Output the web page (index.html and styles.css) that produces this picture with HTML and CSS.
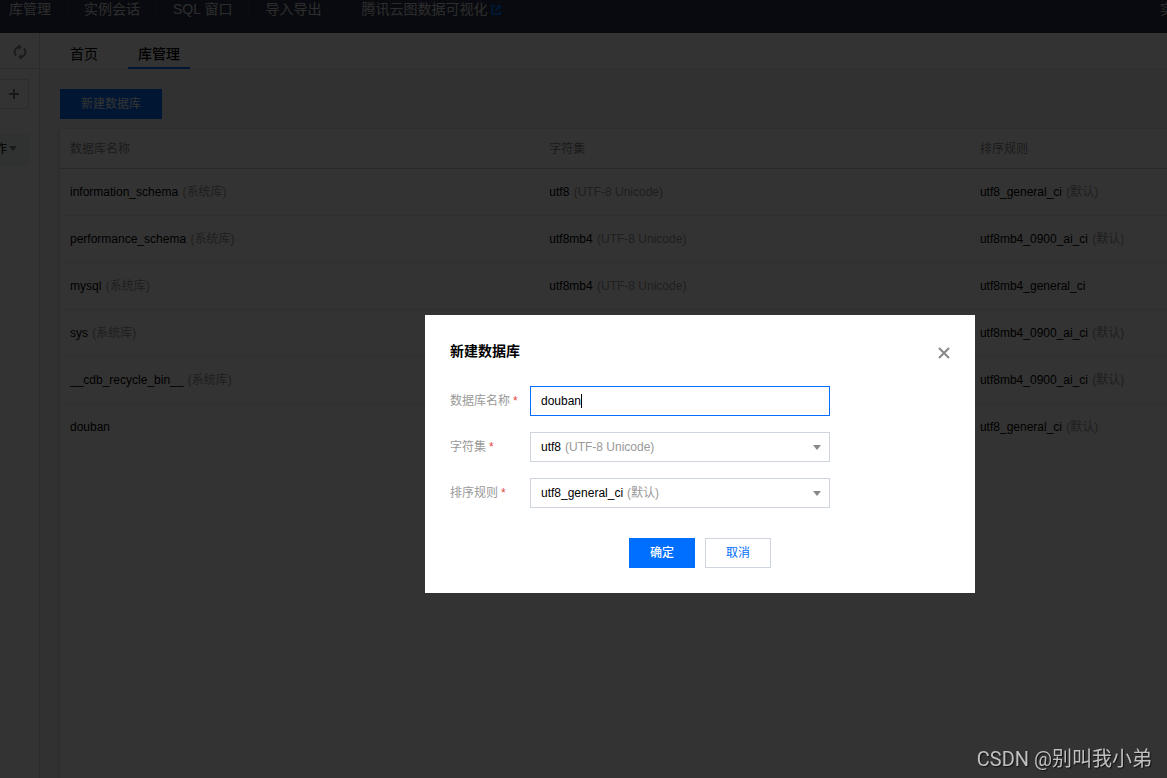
FILE: index.html
```html
<!DOCTYPE html>
<html lang="zh-CN">
<head>
<meta charset="utf-8">
<title>库管理</title>
<link rel="stylesheet" href="styles.css">
</head>
<body>
<div class="app">
  <header class="topbar">
    <nav class="topnav">
      <a class="topnav-item" href="#">库管理</a>
      <a class="topnav-item" href="#">实例会话</a>
      <a class="topnav-item" href="#">SQL 窗口</a>
      <a class="topnav-item" href="#">导入导出</a>
      <a class="topnav-item topnav-external" href="#">腾讯云图数据可视化
        <svg class="icon-external" viewBox="0 0 10 10" width="10" height="10" fill="none" stroke="currentColor" stroke-width="2"><path d="M4 1H1v8h8V6"/><path d="M6 1h3v3M9 1L4 6"/></svg>
      </a>
    </nav>
    <a class="topbar-right" href="#">实</a>
  </header>
  <div class="body">
    <aside class="sidebar">
      <div class="sidebar-head">
        <button class="icon-button" type="button" aria-label="刷新">
          <svg viewBox="0 0 14 16" width="14" height="16"><g fill="none" stroke="currentColor" stroke-width="2"><path d="M3 11.500C.5 8.500 1.500 3.500 6 3"/><path d="M11 4.500C13.500 7.500 12.500 12.500 8 13"/></g><path fill="currentColor" d="M5.500 0v6L9 3zM8.500 10v6L5 13z"/></svg>
        </button>
      </div>
      <button class="add-button" type="button" aria-label="添加">
        <svg viewBox="0 0 10 10" width="10" height="10"><path d="M5 0v10M0 5h10" stroke="currentColor" stroke-width="2"/></svg>
      </button>
      <button class="action-button" type="button">作<svg viewBox="0 0 8 5" width="8" height="5"><path fill="#888" d="M0 0h8L4 5z"/></svg></button>
    </aside>
    <main class="main">
      <nav class="tabs">
        <a class="tab" href="#">首页</a>
        <a class="tab tab-active" href="#">库管理</a>
      </nav>
      <section class="content">
        <button class="button button-primary create-button" type="button">新建数据库</button>
        <div class="panel">
          <table class="table">
            <thead>
              <tr><th class="col-name">数据库名称</th><th class="col-charset">字符集</th><th>排序规则</th></tr>
            </thead>
            <tbody>
              <tr><td>information_schema <span class="muted">(系统库)</span></td><td>utf8 <span class="muted">(UTF-8 Unicode)</span></td><td>utf8_general_ci <span class="muted">(默认)</span></td></tr>
              <tr><td>performance_schema <span class="muted">(系统库)</span></td><td>utf8mb4 <span class="muted">(UTF-8 Unicode)</span></td><td>utf8mb4_0900_ai_ci <span class="muted">(默认)</span></td></tr>
              <tr><td>mysql <span class="muted">(系统库)</span></td><td>utf8mb4 <span class="muted">(UTF-8 Unicode)</span></td><td>utf8mb4_general_ci</td></tr>
              <tr><td>sys <span class="muted">(系统库)</span></td><td></td><td>utf8mb4_0900_ai_ci <span class="muted">(默认)</span></td></tr>
              <tr><td>__cdb_recycle_bin__ <span class="muted">(系统库)</span></td><td></td><td>utf8mb4_0900_ai_ci <span class="muted">(默认)</span></td></tr>
              <tr><td>douban</td><td></td><td>utf8_general_ci <span class="muted">(默认)</span></td></tr>
            </tbody>
          </table>
        </div>
      </section>
    </main>
  </div>
</div>

<div class="overlay">
  <form class="dialog" role="dialog" aria-labelledby="dialog-title">
    <div class="dialog-head">
      <h2 class="dialog-title" id="dialog-title">新建数据库</h2>
      <button class="icon-button dialog-close" type="button" aria-label="关闭">
        <svg viewBox="0 0 12 12" width="12" height="12"><path d="M1 1l10 10M11 1L1 11" stroke="currentColor" stroke-width="2"/></svg>
      </button>
    </div>
    <div class="fields">
      <div class="field">
        <label for="db-name">数据库名称<span class="required">*</span></label>
        <div class="control control-focus"><input id="db-name" class="control-value" type="text" value="douban"><span class="caret"></span></div>
      </div>
      <div class="field">
        <label for="charset">字符集<span class="required">*</span></label>
        <div class="control">
          <select id="charset" class="control-value"><option>utf8</option></select>
          <span class="control-note">(UTF-8 Unicode)</span>
          <svg class="arrow" viewBox="0 0 8 5" width="8" height="5"><path fill="#888" d="M0 0h8L4 5z"/></svg>
        </div>
      </div>
      <div class="field">
        <label for="collation">排序规则<span class="required">*</span></label>
        <div class="control">
          <select id="collation" class="control-value"><option>utf8_general_ci</option></select>
          <span class="control-note">(默认)</span>
          <svg class="arrow" viewBox="0 0 8 5" width="8" height="5"><path fill="#888" d="M0 0h8L4 5z"/></svg>
        </div>
      </div>
    </div>
    <div class="dialog-actions">
      <button class="button button-primary button-confirm" type="submit">确定</button>
      <button class="button button-outline" type="button">取消</button>
    </div>
  </form>
</div>
<div class="watermark">CSDN @别叫我小弟</div>
</body>
</html>
```

FILE: styles.css
```css
* { box-sizing: border-box; }

body {
  margin: 0;
  overflow: hidden;
  color: #000;
  font: 12px/18px "Liberation Sans", "Noto Sans CJK SC", sans-serif;
}

a { color: inherit; text-decoration: none; }
button, input, select { font: inherit; color: inherit; }
svg { display: block; flex: none; }

.app {
  display: flex;
  flex-direction: column;
  min-height: 100vh;
  background: #f2f2f2;
}

.topbar {
  display: flex;
  justify-content: space-between;
  padding-bottom: 15px;
  background: #2d364d;
  color: #ddd;
  font-size: 14px;
}

.topnav { display: flex; padding-left: 9px; }
.topnav-item { padding-right: 16px; white-space: nowrap; }
.topnav-item + .topnav-item { padding-left: 16px; border-left: 1px solid #3a4358; }
.topnav-item + .topnav-external {
  display: flex;
  align-items: center;
  gap: 4px;
  padding-left: 24px;
  border-left: 0;
}
.icon-external { margin-top: 2px; color: #006eff; }
.topbar-right { width: 7px; overflow: hidden; }

.body { display: flex; flex: 1; }

.sidebar {
  display: flex;
  flex-direction: column;
  align-items: flex-start;
  width: 40px;
  border-right: 1px solid #dcdcdc;
  background: #fff;
}
.sidebar-head {
  display: flex;
  align-items: center;
  justify-content: center;
  width: 100%;
  height: 36px;
  padding-top: 3px;
  border-bottom: 1px solid #ddd;
}

.icon-button {
  display: flex;
  padding: 0;
  border: 0;
  background: none;
  color: #888;
}

.add-button {
  display: flex;
  align-items: center;
  justify-content: center;
  width: 29px;
  height: 30px;
  margin-top: 10px;
  padding: 0;
  border: 1px solid #ddd;
  border-left: 0;
  background: none;
  color: #777;
}
.action-button {
  display: flex;
  align-items: center;
  justify-content: flex-end;
  gap: 2px;
  width: 29px;
  height: 32px;
  margin-top: 25px;
  padding: 0 12px 3px 0;
  overflow: hidden;
  border: 0;
  background: #edf3f4;
}

.main { flex: 1; min-width: 0; }

.tabs {
  display: flex;
  gap: 20px;
  height: 36px;
  padding-left: 20px;
  border-bottom: 1px solid #eaeaea;
  background: #fff;
  font-size: 14px;
}
.tab { height: 36px; padding: 12px 10px 0; }
.tab-active { border-bottom: 2px solid #006eff; font-weight: 500; }

.content { padding: 20px 0 0 20px; }

.button {
  height: 30px;
  padding: 0 20px;
  border: 1px solid #cfd5de;
  background: #fff;
  color: #006eff;
}
.button-primary { border-color: #006eff; background: #006eff; color: #fff; }
.create-button { display: block; }
.button-confirm { font-weight: 500; }

.panel {
  min-height: calc(100vh - 129px);
  margin-top: 10px;
  background: #fff;
  box-shadow: 0 1px 4px rgba(0, 0, 0, 0.2);
}

.table { width: 100%; border-collapse: separate; border-spacing: 0; table-layout: fixed; }
.table th, .table td { padding: 0 10px; text-align: left; white-space: nowrap; }
.table th { height: 40px; color: #888; font-weight: 400; }
.table td { height: 47px; border-bottom: 1px solid #e9e9e9; }
.table tbody tr:last-child td { border-bottom-color: transparent; }
.table .col-name { width: 43.3%; }
.table .col-charset { width: 38.9%; }
.table thead th { border-bottom: 1px solid #ccc; }
.muted { margin-left: 1px; color: #999; }

.overlay {
  position: fixed;
  inset: 0;
  display: flex;
  align-items: center;
  justify-content: center;
  padding: 130px 0 0 233px;
  background: rgba(0, 0, 0, 0.8);
}

.dialog { width: 550px; padding: 25px; background: #fff; }
.dialog-head { display: flex; align-items: flex-start; justify-content: space-between; height: 24px; }
.dialog-title { margin: 0; font-size: 14px; line-height: 22px; font-weight: 700; }
.dialog-close { padding-top: 7px; }

.fields { display: grid; gap: 16px; margin-top: 22px; }
.field { display: grid; grid-template-columns: 80px 300px; align-items: center; color: #999; }
.required { margin-left: 3px; color: #e54545; }

.control {
  display: flex;
  align-items: center;
  gap: 4px;
  height: 30px;
  padding: 0 8px 0 10px;
  border: 1px solid #cfd5de;
}
.control-focus { gap: 0; border-color: #006eff; }
.control-value {
  field-sizing: content;
  height: 18px;
  padding: 0;
  border: 0;
  outline: 0;
  appearance: none;
  background: none;
  color: #000;
  caret-color: transparent;
}
.caret { width: 1px; height: 14px; background: #000; }
.arrow { margin-left: auto; }

.dialog-actions { display: flex; justify-content: center; gap: 10px; margin-top: 30px; }

.watermark {
  position: fixed;
  right: 15px;
  bottom: 7px;
  color: #c0c0c0;
  font: 20px/24px Roboto, "Noto Sans CJK SC", sans-serif;
  text-shadow: 1px 1px 1px #111;
}
```
